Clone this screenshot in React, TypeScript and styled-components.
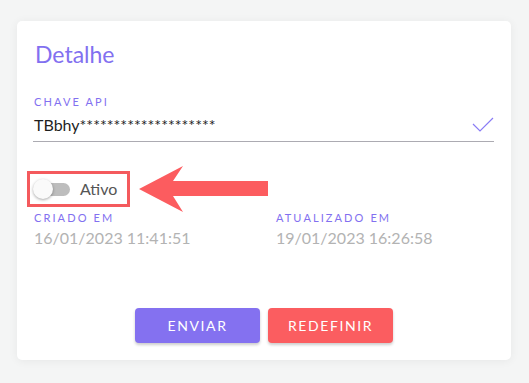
import React from "react";
import styled, { createGlobalStyle } from "styled-components";

const Global = createGlobalStyle`
  html, body { margin: 0; padding: 0; background: #f4f5f5; }
  body { font-family: "Lato", "Open Sans", sans-serif; }
  * { box-sizing: border-box; }
`;

const Page = styled.div`
  width: 529px;
  height: 383px;
  padding: 21px 18px 0 17px;
  background: #f4f5f5;
`;

const Card = styled.div`
  width: 494px;
  height: 339px;
  background: #ffffff;
  border-radius: 5px;
  box-shadow: 0 1px 10px rgba(0, 0, 0, 0.06);
  padding: 17px;
  display: flex;
  flex-direction: column;
`;

const Title = styled.h2`
  margin: 0;
  font-size: 23px;
  line-height: 28px;
  font-weight: 400;
  color: #8270f0;
  padding-top: 2px;
  padding-left: 1px;
`;

const Content = styled.div`
  display: flex;
  flex-direction: column;
`;

const Label = styled.div`
  font-size: 11px;
  line-height: 14px;
  letter-spacing: 2.1px;
  color: #8270f0;
  text-transform: uppercase;
`;

const Field = styled.div`
  margin-top: 27px;
`;

const InputRow = styled.div`
  margin-top: 4px;
  display: flex;
  align-items: center;
  justify-content: space-between;
  height: 29px;
  padding-bottom: 5px;
  border-bottom: 1px solid #acabb2;
  margin-left: -1px;
  padding-left: 1px;
`;

const InputText = styled.span`
  font-size: 16px;
  line-height: 20px;
  color: #1f1f1f;
`;

const ToggleRow = styled.div`
  margin-top: 29px;
  margin-left: -7px;
  display: flex;
  align-items: center;
  height: 36px;
`;

const Highlight = styled.div`
  width: 103px;
  height: 36px;
  border: 3px solid #f45a5d;
  display: flex;
  align-items: center;
  padding-left: 3px;
  gap: 9px;
`;

const Switch = styled.div`
  position: relative;
  width: 38px;
  height: 20px;
  display: flex;
  align-items: center;
`;

const Track = styled.div`
  margin-left: 2px;
  width: 35px;
  height: 13px;
  border-radius: 7px;
  background: #bdbdbd;
`;

const Knob = styled.div`
  position: absolute;
  left: 0;
  top: 0;
  width: 20px;
  height: 20px;
  border-radius: 50%;
  background: #fafafa;
  box-shadow: 0 1px 3px rgba(0, 0, 0, 0.35);
`;

const SwitchLabel = styled.span`
  font-size: 16px;
  line-height: 20px;
  color: #555555;
`;

const Arrow = styled.svg`
  margin-left: 9px;
  flex: none;
`;

const Dates = styled.div`
  margin-top: 4px;
  display: grid;
  grid-template-columns: 242px 1fr;
`;

const DateValue = styled.div`
  margin-top: 3px;
  font-size: 16px;
  line-height: 19px;
  color: #b3b3b3;
`;

const Actions = styled.div`
  margin-top: auto;
  display: flex;
  justify-content: center;
  gap: 8px;
`;

const Button = styled.button<{ $color: string }>`
  width: 125px;
  height: 35px;
  border: none;
  border-radius: 4px;
  background: ${(p) => p.$color};
  color: #ffffff;
  font-family: "Lato", sans-serif;
  font-size: 14px;
  font-weight: 400;
  letter-spacing: 1.6px;
  box-shadow: 0 2px 3px rgba(0, 0, 0, 0.2);
  cursor: pointer;
`;

export default function App() {
  return (
    <>
      <Global />
      <Page>
        <Card>
          <Title>Detalhe</Title>
          <Content>
            <Field>
              <Label>Chave API</Label>
              <InputRow>
                <InputText>TBbhy********************</InputText>
                <svg width="22" height="16" viewBox="0 0 22 16">
                  <polyline
                    points="1,7 8,14 21,1"
                    fill="none"
                    stroke="#8a7cf5"
                    strokeWidth="1.2"
                  />
                </svg>
              </InputRow>
            </Field>
            <ToggleRow>
              <Highlight>
                <Switch>
                  <Track />
                  <Knob />
                </Switch>
                <SwitchLabel>Ativo</SwitchLabel>
              </Highlight>
              <Arrow width="130" height="46" viewBox="0 0 130 46">
                <polygon
                  points="0,23 44,0 34,15 129,15 129,30 34,30 44,46"
                  fill="#fc5c5f"
                />
              </Arrow>
            </ToggleRow>
            <Dates>
              <div>
                <Label>Criado em</Label>
                <DateValue>16/01/2023 11:41:51</DateValue>
              </div>
              <div>
                <Label>Atualizado em</Label>
                <DateValue>19/01/2023 16:26:58</DateValue>
              </div>
            </Dates>
          </Content>
          <Actions>
            <Button $color="#8471f0">ENVIAR</Button>
            <Button $color="#fb5d60">REDEFINIR</Button>
          </Actions>
        </Card>
      </Page>
    </>
  );
}
